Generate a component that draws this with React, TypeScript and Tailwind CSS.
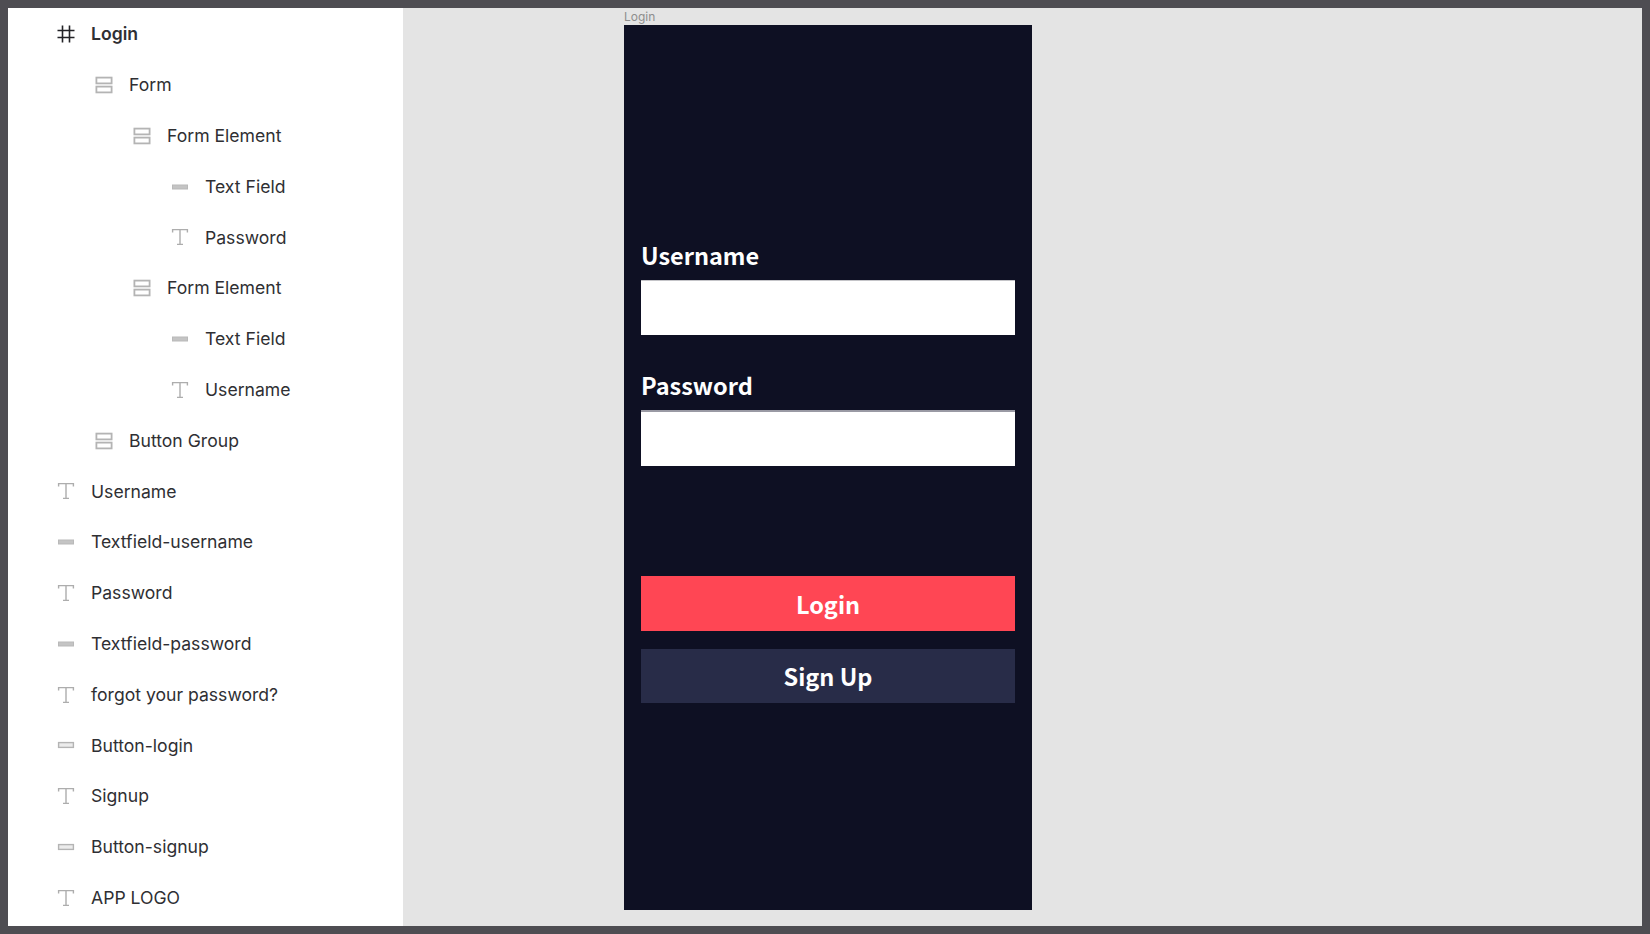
type IconKind = "frame" | "stack" | "field" | "button" | "text";

type Row = { label: string; depth: number; icon: IconKind; bold?: boolean };

const ROWS: Row[] = [
  { label: "Login", depth: 0, icon: "frame", bold: true },
  { label: "Form", depth: 1, icon: "stack" },
  { label: "Form Element", depth: 2, icon: "stack" },
  { label: "Text Field", depth: 3, icon: "field" },
  { label: "Password", depth: 3, icon: "text" },
  { label: "Form Element", depth: 2, icon: "stack" },
  { label: "Text Field", depth: 3, icon: "field" },
  { label: "Username", depth: 3, icon: "text" },
  { label: "Button Group", depth: 1, icon: "stack" },
  { label: "Username", depth: 0, icon: "text" },
  { label: "Textfield-username", depth: 0, icon: "field" },
  { label: "Password", depth: 0, icon: "text" },
  { label: "Textfield-password", depth: 0, icon: "field" },
  { label: "forgot your password?", depth: 0, icon: "text" },
  { label: "Button-login", depth: 0, icon: "button" },
  { label: "Signup", depth: 0, icon: "text" },
  { label: "Button-signup", depth: 0, icon: "button" },
  { label: "APP LOGO", depth: 0, icon: "text" },
];

const DEPTH_PADDING = ["pl-[49px]", "pl-[87px]", "pl-[125px]", "pl-[163px]"];

function LayerIcon({ kind }: { kind: IconKind }) {
  if (kind === "frame") {
    return (
      <svg width="18" height="18" viewBox="0 0 18 18" fill="none" stroke="#232327" strokeWidth="1.6">
        <path d="M5.5 0.5V17.5M12.5 0.5V17.5M0.5 5.5H17.5M0.5 12.5H17.5" />
      </svg>
    );
  }
  if (kind === "stack") {
    return (
      <svg width="18" height="18" viewBox="0 0 18 18" fill="none" stroke="#b4b4b4" strokeWidth="1.8">
        <rect x="1.4" y="1.6" width="15.2" height="5.8" />
        <rect x="1.4" y="10.6" width="15.2" height="5.8" />
      </svg>
    );
  }
  if (kind === "field") {
    return (
      <svg width="18" height="18" viewBox="0 0 18 18" fill="#c4c4c4" stroke="#b9b9b9" strokeWidth="1">
        <rect x="1.5" y="7" width="15" height="4" />
      </svg>
    );
  }
  if (kind === "button") {
    return (
      <svg width="18" height="18" viewBox="0 0 18 18" fill="#ececec" stroke="#b4b4b4" strokeWidth="1.4">
        <rect x="1.6" y="6.6" width="14.8" height="4.8" />
      </svg>
    );
  }
  return (
    <svg width="18" height="18" viewBox="0 0 18 18" fill="none" stroke="#adadad" strokeWidth="1.4">
      <path d="M1.6 4.4V1.6H16.4V4.4M9 1.6V16.4M6 16.4H12" />
    </svg>
  );
}

function LayerRow({ row }: { row: Row }) {
  return (
    <div className={`flex h-[50.8px] items-center gap-[16px] ${DEPTH_PADDING[row.depth]}`}>
      <LayerIcon kind={row.icon} />
      <span className={`text-[17.6px] leading-none text-[#2f2f33] ${row.bold ? "font-semibold" : "font-normal"}`}>
        {row.label}
      </span>
    </div>
  );
}

function FormField({ label, inputClass }: { label: string; inputClass: string }) {
  return (
    <div className="flex flex-col">
      <label className="mb-[7px] flex h-[34px] items-center text-[23.5px] font-bold leading-none text-white">
        {label}
      </label>
      <div className={`bg-white ${inputClass}`} />
    </div>
  );
}

export default function App() {
  return (
    <div className="flex h-screen overflow-hidden bg-[#4e4d52] p-[8px] [font-family:Inter,sans-serif]">
      <aside className="h-full w-[395px] shrink-0 bg-white pt-[0.8px]">
        {ROWS.map((row, i) => (
          <LayerRow key={i} row={row} />
        ))}
      </aside>
      <main className="h-full flex-1 bg-[#e4e4e4] pl-[221px]">
        <div className="flex h-[17px] items-center text-[12px] leading-none text-[#8e8e8e]">Login</div>
        <div className="flex h-[885px] w-[408px] flex-col bg-[#0e1023] px-[17px] pt-[214px] [font-family:'Noto_Sans_CJK_JP',sans-serif]">
          <FormField label="Username" inputClass="h-[55px] border-t border-[#c4c4c8]" />
          <div className="mt-[34px]">
            <FormField label="Password" inputClass="h-[56px] border-t-2 border-[#9a9aa4]" />
          </div>
          <button
            type="button"
            className="mt-[110px] h-[55px] bg-[#ff4654] pt-[2px] text-[23.5px] font-bold leading-none text-white"
          >
            Login
          </button>
          <button
            type="button"
            className="mt-[18px] h-[54px] bg-[#282c48] pt-[2px] text-[23.5px] font-bold leading-none text-white"
          >
            Sign Up
          </button>
        </div>
      </main>
    </div>
  );
}
